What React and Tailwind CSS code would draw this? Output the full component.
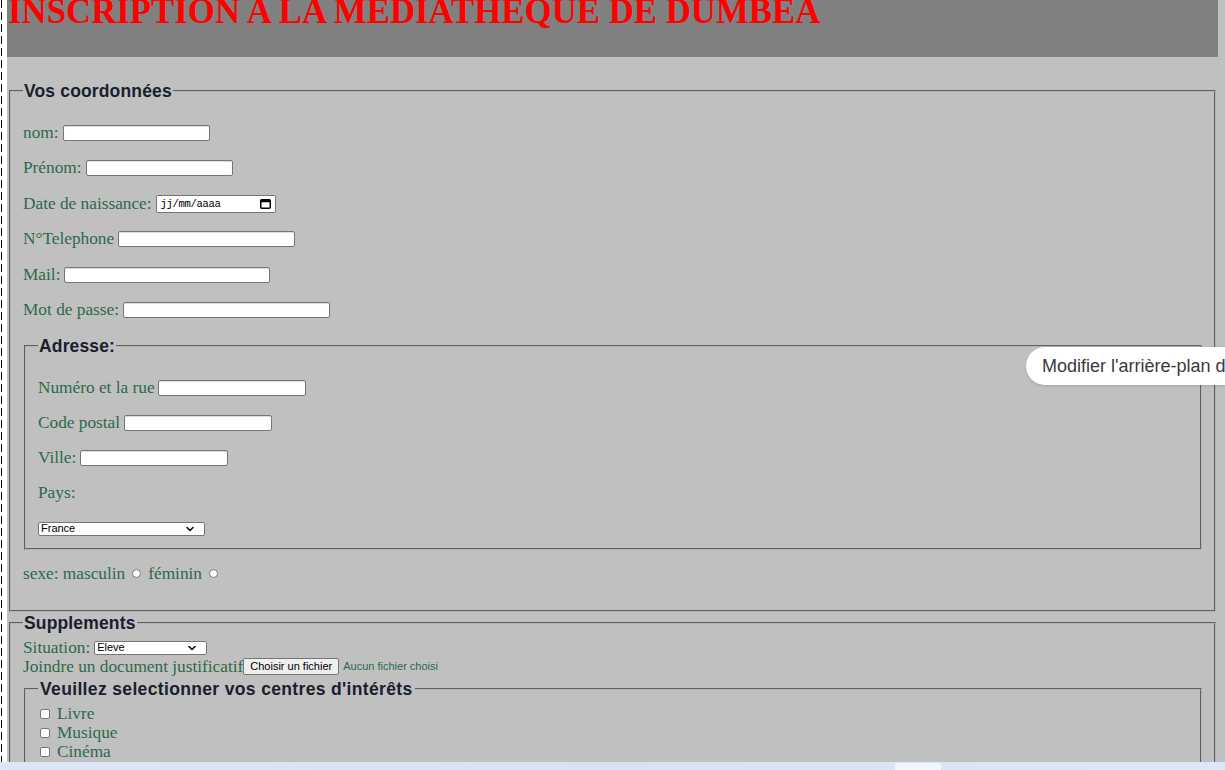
import React from "react";
import { ChevronDown } from "lucide-react";

const serif = "font-['Liberation_Serif',serif]";
const sans = "font-['Liberation_Sans',Arial,sans-serif]";
const green = "text-[#2d6a4a]";

const Legend = ({ children }) => (
  <legend
    className={`px-[1px] ${sans} text-[17.5px] font-bold leading-[18px] tracking-[0.15px] text-[#19202e]`}
  >
    {children}
  </legend>
);

const TextBox = ({ width }) => (
  <input
    type="text"
    className="h-[16px] rounded-[2px] border border-[#767676] bg-white shadow-[inset_0_1px_1px_rgba(0,0,0,0.15)] outline-none"
    style={{ width }}
  />
);

const Row = ({ label, children, gap = "gap-[4px]" }) => (
  <div className={`flex h-[20px] items-center ${gap}`}>
    <span className={`${serif} ${green} text-[17.3px] leading-[20px] whitespace-nowrap`}>
      {label}
    </span>
    {children}
  </div>
);

const FakeSelect = ({ value, width }) => (
  <div
    className={`flex h-[14px] items-center justify-between rounded-[2px] border border-[#767676] bg-white pl-[2px] pr-[8px] ${sans} text-[11px] leading-none text-black`}
    style={{ width }}
  >
    <span>{value}</span>
    <ChevronDown size={12} strokeWidth={3} className="text-black" />
  </div>
);

const Radio = () => (
  <span className="inline-block h-[9px] w-[9px] rounded-full border border-[#767676] bg-white" />
);

const Check = ({ label }) => (
  <div className="flex h-[19px] items-center">
    <span className="ml-[2px] mr-[7px] inline-block h-[10px] w-[10px] rounded-[2px] border border-[#767676] bg-white" />
    <span className={`${serif} ${green} text-[17.3px] leading-[19px]`}>{label}</span>
  </div>
);

const fieldsetCls =
  "border-2 [border-style:groove] border-[#b4b4b4] px-[12px] min-w-0";

export default function App() {
  return (
    <div className="relative flex h-screen flex-col overflow-hidden bg-[#c0c0c0]">
      <div className="flex min-h-0 flex-1">
        <div className="w-[7px] shrink-0 bg-white">
          <div className="ml-[1px] h-full w-[1px] bg-[repeating-linear-gradient(to_bottom,#000_0,#000_8px,transparent_8px,transparent_12px)]" />
        </div>

        <main className="flex w-[1211px] shrink-0 flex-col">
          <header className="h-[57px] shrink-0 overflow-hidden bg-[#808080] pl-[1px]">
            <h1 className="mt-[-5px] font-['Liberation_Serif',serif] text-[34.8px] font-bold leading-[34px] whitespace-nowrap text-[#ff0000]">
              INSCRIPTION A LA MEDIATHEQUE DE DUMBEA
            </h1>
          </header>

          <form className="flex flex-col">
            {/* Vos coordonnées */}
            <fieldset className={`${fieldsetCls} mx-[2px] mt-[25px] pt-[23px] pb-[26px]`}>
              <Legend>Vos coordonnées</Legend>
              <div className="flex flex-col gap-[15.4px]">
                <Row label="nom:">
                  <TextBox width={147} />
                </Row>
                <Row label="Prénom:">
                  <TextBox width={147} />
                </Row>
                <Row label="Date de naissance:">
                  <div className="flex h-[18px] w-[120px] items-center justify-between rounded-[2px] border border-[#767676] bg-white pl-[4px] pr-[4px]">
                    <span className="font-['Liberation_Mono',monospace] text-[10.5px] leading-none tracking-[-0.3px] text-black">
                      jj/mm/aaaa
                    </span>
                    <svg width="11" height="10" viewBox="0 0 11 10">
                      <rect x="0.75" y="0.75" width="9.5" height="8.5" rx="1" fill="none" stroke="#000" strokeWidth="1.5" />
                      <rect x="0.75" y="0.75" width="9.5" height="2.5" fill="#000" />
                    </svg>
                  </div>
                </Row>
                <Row label="N°Telephone">
                  <TextBox width={177} />
                </Row>
                <Row label="Mail:">
                  <TextBox width={206} />
                </Row>
                <Row label="Mot de passe:">
                  <TextBox width={207} />
                </Row>
              </div>

              {/* Adresse */}
              <fieldset className={`${fieldsetCls} ml-[1px] mt-[17px] pt-[23px] pb-[12px]`}>
                <Legend>Adresse:</Legend>
                <div className="flex flex-col gap-[15px]">
                  <Row label="Numéro et la rue" gap="gap-[3px]">
                    <TextBox width={148} />
                  </Row>
                  <Row label="Code postal">
                    <TextBox width={148} />
                  </Row>
                  <Row label="Ville:">
                    <TextBox width={148} />
                  </Row>
                  <Row label="Pays:" />
                </div>
                <div className="mt-[19px]">
                  <FakeSelect value="France" width={167} />
                </div>
              </fieldset>

              <div className={`mt-[14px] flex h-[20px] items-center ${serif} ${green} text-[17.3px] leading-[20px]`}>
                <span>sexe: masculin</span>
                <span className="mx-[7px] flex items-center">
                  <Radio />
                </span>
                <span>féminin</span>
                <span className="ml-[7px] flex items-center">
                  <Radio />
                </span>
              </div>
            </fieldset>

            {/* Supplements */}
            <fieldset className={`${fieldsetCls} mx-[2px] mt-[2px] pt-[6.5px] pb-[20px]`}>
              <Legend>Supplements</Legend>
              <div className="flex h-[19px] items-center gap-[4px]">
                <span className={`${serif} ${green} text-[17.3px] leading-[19px]`}>Situation:</span>
                <FakeSelect value="Eleve" width={113} />
              </div>
              <div className="flex h-[19px] items-center">
                <span className={`${serif} ${green} text-[17.3px] leading-[19px] whitespace-nowrap`}>
                  Joindre un document justificatif
                </span>
                <span className={`flex h-[17px] items-center rounded-[2px] border border-[#767676] bg-[#efefef] px-[6px] ${sans} text-[11px] leading-none text-black`}>
                  Choisir un fichier
                </span>
                <span className={`ml-[4px] ${sans} text-[11px] leading-none ${green}`}>
                  Aucun fichier choisi
                </span>
              </div>

              <fieldset className={`${fieldsetCls} ml-[1px] mt-[3.5px] pt-[6.5px] pb-[12px]`}>
                <legend
                  className={`px-[2px] ${sans} text-[17.5px] font-bold leading-[18px] tracking-[0.35px] text-[#19202e]`}
                >
                  Veuillez selectionner vos centres d'intérêts
                </legend>
                <Check label="Livre" />
                <Check label="Musique" />
                <Check label="Cinéma" />
              </fieldset>
            </fieldset>
          </form>
        </main>
        <div className="flex-1" />
      </div>

      <div className="flex h-[8px] shrink-0 bg-[linear-gradient(to_right,#dce6f6,#d6e2f7,#dde7f6)]">
        <div className="ml-[895px] mt-[1px] h-[7px] w-[46px] rounded-t-[3px] bg-[#f2f5fb]" />
      </div>

      <div className="absolute left-[1026px] right-0 top-[347px] flex h-[38px] items-center overflow-hidden rounded-l-[19px] bg-white pl-[16px] shadow-[0_1px_3px_rgba(0,0,0,0.15)]">
        <span className={`${sans} text-[18px] leading-none whitespace-nowrap text-[#3a3a3a]`}>
          Modifier l'arrière-plan d
        </span>
      </div>
    </div>
  );
}
